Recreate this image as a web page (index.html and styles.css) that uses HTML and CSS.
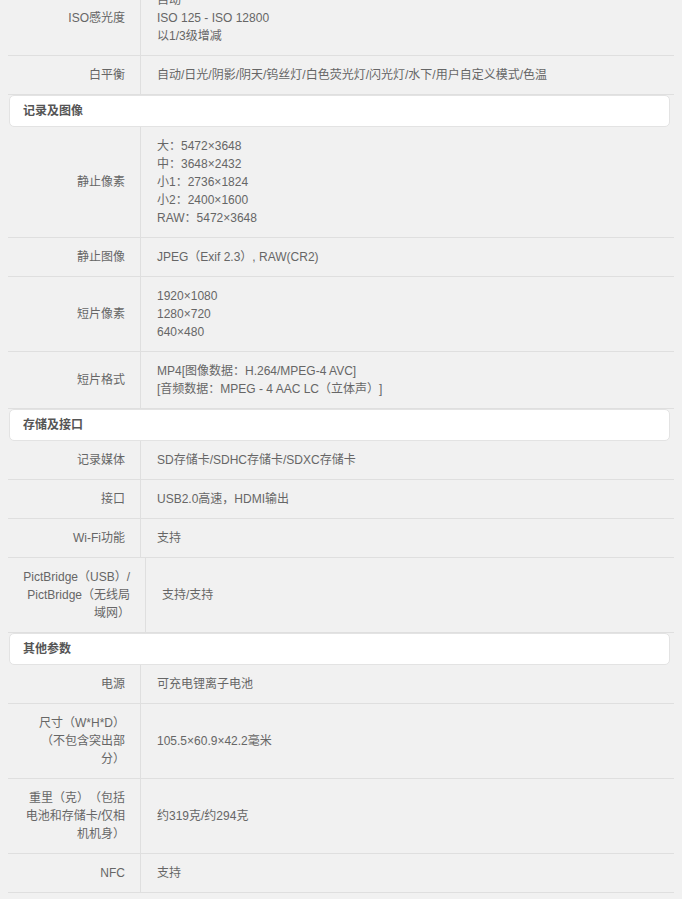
FILE: index.html
```html
<!DOCTYPE html>
<html lang="zh-CN">
<head>
    <meta charset="UTF-8">
    <meta name="viewport" content="width=device-width, initial-scale=1.0">
    <title>相机参数</title>
    <link rel="stylesheet" href="styles.css">
</head>
<body>
    <div class="specs">
        <div class="row">
            <div class="label">ISO感光度</div>
            <div class="value">自动<br>ISO 125 - ISO 12800<br>以1/3级增减</div>
        </div>
        <div class="row">
            <div class="label">白平衡</div>
            <div class="value">自动/日光/阴影/阴天/钨丝灯/白色荧光灯/闪光灯/水下/用户自定义模式/色温</div>
        </div>

        <h3 class="section-title">记录及图像</h3>
        <div class="row">
            <div class="label">静止像素</div>
            <div class="value">大：5472×3648<br>中：3648×2432<br>小1：2736×1824<br>小2：2400×1600<br>RAW：5472×3648</div>
        </div>
        <div class="row">
            <div class="label">静止图像</div>
            <div class="value">JPEG（Exif 2.3）, RAW(CR2)</div>
        </div>
        <div class="row">
            <div class="label">短片像素</div>
            <div class="value">1920×1080<br>1280×720<br>640×480</div>
        </div>
        <div class="row">
            <div class="label">短片格式</div>
            <div class="value">MP4[图像数据：H.264/MPEG-4 AVC]<br>[音频数据：MPEG - 4 AAC LC（立体声）]</div>
        </div>

        <h3 class="section-title">存储及接口</h3>
        <div class="row">
            <div class="label">记录媒体</div>
            <div class="value">SD存储卡/SDHC存储卡/SDXC存储卡</div>
        </div>
        <div class="row">
            <div class="label">接口</div>
            <div class="value">USB2.0高速，HDMI输出</div>
        </div>
        <div class="row">
            <div class="label">Wi-Fi功能</div>
            <div class="value">支持</div>
        </div>
        <div class="row row-wide">
            <div class="label">PictBridge（USB）/ PictBridge（无线局域网）</div>
            <div class="value">支持/支持</div>
        </div>

        <h3 class="section-title">其他参数</h3>
        <div class="row">
            <div class="label">电源</div>
            <div class="value">可充电锂离子电池</div>
        </div>
        <div class="row">
            <div class="label">尺寸（W*H*D）（不包含突出部分）</div>
            <div class="value">105.5×60.9×42.2毫米</div>
        </div>
        <div class="row">
            <div class="label">重里（克）（包括电池和存储卡/仅相机机身）</div>
            <div class="value">约319克/约294克</div>
        </div>
        <div class="row">
            <div class="label">NFC</div>
            <div class="value">支持</div>
        </div>
    </div>
</body>
</html>
```

FILE: styles.css
```css
body {
    margin: 0;
    background: #f1f1f1;
    font-family: "Liberation Sans", "Noto Sans CJK SC", sans-serif;
    font-size: 12px;
    color: #666;
    text-spacing-trim: space-all;
}
.specs {
    width: 666px;
    margin: -19px 0 0 8px;
}
.row {
    display: flex;
    border-bottom: 1px solid #dfdfdf;
    line-height: 18px;
}
.label {
    width: 102px;
    flex: none;
    padding: 10px 15px;
    text-align: right;
    border-right: 1px solid #dfdfdf;
    display: flex;
    align-items: center;
    justify-content: flex-end;
}
.row-wide .label {
    width: 107px;
}
.value {
    flex: 1;
    padding: 10px 15px 10px 16px;
    display: flex;
    flex-direction: column;
    justify-content: center;
}
.section-title {
    margin: 0 4px 0 1px;
    height: 30px;
    line-height: 30px;
    padding: 0 13px;
    background: #fff;
    border: 1px solid #e3e3e3;
    border-radius: 5px;
    font-size: 12px;
    font-weight: bold;
    color: #555;
}
```
